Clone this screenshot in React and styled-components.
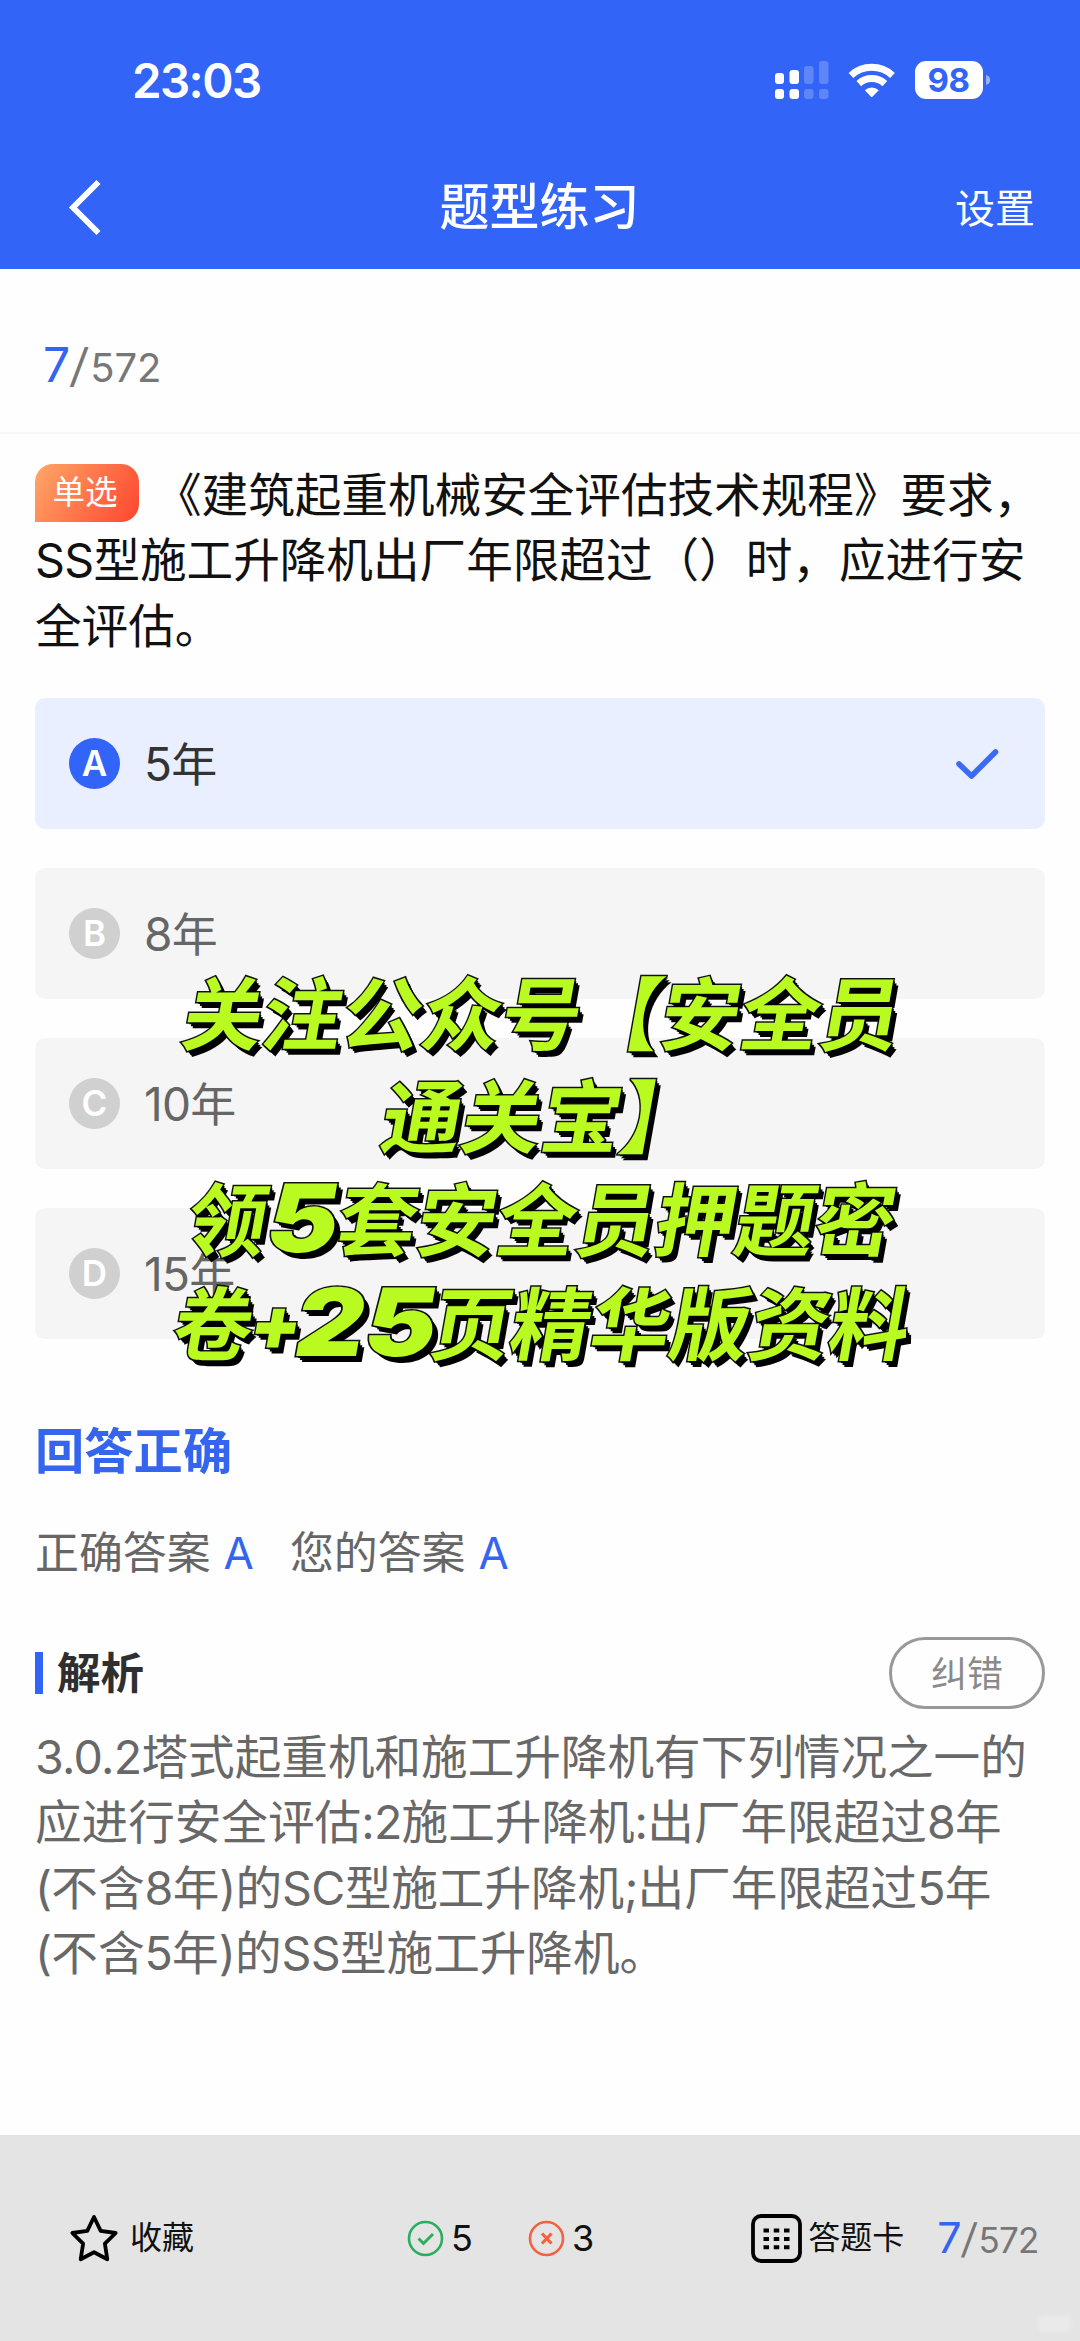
import styled, { createGlobalStyle, css } from 'styled-components';

const GlobalStyle = createGlobalStyle`
  * {
    box-sizing: border-box;
  }

  body {
    margin: 0;
    background: #fefefe;
    font-family: Inter, 'Noto Sans CJK SC', sans-serif;
    font-feature-settings: 'calt' 0;
    -webkit-font-smoothing: antialiased;
  }
`;

const Page = styled.div`
  position: relative;
  width: 1080px;
  height: 2341px;
  display: flex;
  flex-direction: column;
  overflow: hidden;
  background: #fefefe;
`;

const Header = styled.header`
  height: 269px;
  background: #3164f7;
  color: #fff;
`;

const StatusBar = styled.div`
  height: 160px;
  padding: 0 89px 0 132px;
  display: flex;
  align-items: center;
  justify-content: space-between;
`;

const Time = styled.span`
  font-size: 47.5px;
  font-weight: 600;
  letter-spacing: -1.6px;
`;

const NavBar = styled.div`
  height: 94px;
  padding: 0 45px 0 66px;
  display: grid;
  grid-template-columns: 1fr auto 1fr;
  align-items: center;
`;

const NavTitle = styled.h1`
  margin: 0;
  padding-right: 22px;
  font-size: 50px;
  font-weight: 500;
  line-height: 70px;
`;

const NavAction = styled.span`
  justify-self: end;
  padding-top: 4px;
  font-size: 40px;
  line-height: 60px;
`;

const ProgressBar = styled.div`
  height: 165px;
  padding: 66px 0 0 43px;
  border-bottom: 2px solid #f6f6f6;
`;

const Progress = styled.div`
  display: flex;
  align-items: baseline;
  line-height: 60px;
  font-size: ${props => (props.$small ? '35px' : '40px')};
  letter-spacing: ${props => (props.$small ? '-0.8px' : '-0.2px')};
  color: #777;

  b {
    font-size: ${props => (props.$small ? '43px' : '48px')};
    font-weight: 400;
    color: #3565ee;
  }

  i {
    font-style: normal;
    font-size: 1.15em;
    transform: skewX(-6deg);
    margin: 0 3px 0 1px;
  }
`;

const Content = styled.main`
  flex: 1;
  padding: 29px 35px 0;
`;

const Question = styled.div`
  height: 197px;
  font-size: 46.6px;
  line-height: 65.4px;
  color: #111;
  white-space: nowrap;
`;

const Line = styled.div`
  height: 65.4px;
  display: flex;
  align-items: center;
`;

const Latin = styled.span`
  letter-spacing: -0.7px;
`;

const TypeBadge = styled.span`
  width: 104px;
  height: 58px;
  margin: -5px 16px 0 0;
  padding-right: 4px;
  border-radius: 18px 18px 18px 0;
  background: linear-gradient(120deg, #ffa265 5%, #ff4d33 92%);
  color: #fff;
  font-size: 32.5px;
  line-height: 58px;
  text-align: center;
`;

const Options = styled.div`
  margin-top: 38px;
  display: flex;
  flex-direction: column;
  gap: 39px;
`;

const OptionLetter = styled.span`
  width: 51px;
  height: 51px;
  margin-right: 24px;
  border-radius: 50%;
  background: #d0d0d0;
  color: #fff;
  font-size: 35px;
  font-weight: 600;
  line-height: 51px;
  text-align: center;
`;

const Option = styled.div`
  height: 131px;
  padding: 0 45px 0 34px;
  display: flex;
  align-items: center;
  border-radius: 10px;
  background: #f5f5f5;
  color: #666;
  font-size: 46px;
  line-height: 66px;

  svg {
    margin-left: auto;
  }

  ${props =>
    props.$active &&
    css`
      background: #e9effe;
      color: #333;

      ${OptionLetter} {
        background: #3164f7;
      }
    `}
`;

const Result = styled.h2`
  margin: 77px 0 0;
  font-size: 49.3px;
  font-weight: 700;
  line-height: 70px;
  color: #3565ee;
`;

const Answers = styled.div`
  margin-top: 35px;
  display: flex;
  font-size: 43.9px;
  line-height: 64px;
  color: #666;
`;

const Answer = styled.span`
  margin-right: 36px;
  white-space: nowrap;

  b {
    margin-left: 13px;
    font-weight: 400;
    color: #3565ee;
  }
`;

const AnalysisHead = styled.div`
  height: 72px;
  margin-top: 52px;
  display: flex;
  align-items: center;
  justify-content: space-between;
`;

const AnalysisTitle = styled.h3`
  margin: 0;
  display: flex;
  align-items: center;
  font-size: 43.5px;
  font-weight: 700;
  line-height: 60px;
  color: #2f2f2f;

  &::before {
    content: '';
    width: 8px;
    height: 42px;
    margin-right: 14px;
    background: #3164f7;
  }
`;

const ReportButton = styled.button`
  width: 156px;
  height: 72px;
  padding: 0 0 5px;
  border: 3px solid #999;
  border-radius: 36px;
  background: none;
  color: #8a8a8a;
  font-family: inherit;
  font-size: 36px;
`;

const AnalysisText = styled.div`
  margin-top: 16px;
  font-size: 46.6px;
  line-height: 65.4px;
  color: #686868;
  white-space: nowrap;
`;

const Footer = styled.footer`
  height: 206px;
  padding: 0 42px 0 69px;
  display: flex;
  align-items: center;
  background: #e4e4e4;
`;

const FooterItem = styled.div`
  height: 60px;
  margin-left: ${props => props.$left || 0}px;
  display: flex;
  align-items: center;
  gap: ${props => props.$gap}px;
  font-size: ${props => props.$size || 32}px;
  line-height: 60px;
  color: #111;
  white-space: nowrap;
`;

const Promo = styled.div`
  position: absolute;
  top: 964px;
  left: 2px;
  width: 1080px;
  display: flex;
  flex-direction: column;
  align-items: center;
  font-size: 79.6px;
  font-weight: 700;
  line-height: 103.2px;
  color: #b9fb20;
  -webkit-text-stroke: 3px #111;
  paint-order: stroke fill;
  text-shadow: 2px 2px 0 #000, 4px 4px 0 #000, 6px 6px 0 #000;
`;

const PromoLine = styled.div`
  height: 103.2px;
  transform: skewX(-10deg);
  white-space: nowrap;
`;

const PromoNumber = styled.span`
  display: inline-block;
  margin: 0 ${props => props.$gap || 0}px;
  font-size: 94px;
  font-weight: 900;
  line-height: 0;
  transform: translateY(2px) scaleX(1.14);
`;

const PromoPlus = styled(PromoNumber)`
  margin: 0 -1px 0 -3px;
  font-size: 74px;
  transform: translateY(-4px);
`;

const Watermark = styled.div`
  position: absolute;
  right: 8px;
  bottom: 9px;
  width: 34px;
  height: 17px;
  border-radius: 6px;
  background: rgba(255, 255, 255, 0.22);
  filter: blur(2px);
`;

const options = [
  { letter: 'A', text: '5年' },
  { letter: 'B', text: '8年' },
  { letter: 'C', text: '10年' },
  { letter: 'D', text: '15年' },
];

const analysis = [
  '3.0.2塔式起重机和施工升降机有下列情况之一的',
  '应进行安全评估:2施工升降机:出厂年限超过8年',
  '(不含8年)的SC型施工升降机;出厂年限超过5年',
  '(不含5年)的SS型施工升降机。',
];

// tightens digits and letters, leaves the Chinese spacing alone
function Mixed({ text }) {
  return (
    <span>
      {text.split(/([\x20-\x7e]+)/).map((part, i) => (i % 2 ? <Latin key={i}>{part}</Latin> : part))}
    </span>
  );
}

function StatusIcons() {
  return (
    <svg width="216" height="40" viewBox="775 60 216 40">
      <g fill="#fff">
        <rect x="775" y="73" width="9" height="11" rx="3" />
        <rect x="789.5" y="70" width="9.5" height="14" rx="3" />
        <rect x="775" y="89" width="9" height="10" rx="3" />
        <rect x="789.5" y="89" width="9.5" height="10" rx="3" />
      </g>
      <g fill="#fff" opacity="0.22">
        <rect x="804" y="66" width="9.5" height="18" rx="3" />
        <rect x="819" y="61" width="9.5" height="23" rx="3" />
        <rect x="804" y="89" width="9.5" height="10" rx="3" />
        <rect x="819" y="89" width="9.5" height="10" rx="3" />
      </g>
      <g fill="none" stroke="#fff" strokeWidth="7">
        <path d="M851 75.5a30.5 30.5 0 0 1 41.5 0" />
        <path d="M858.8 83.6a19.3 19.3 0 0 1 26 0" />
      </g>
      <path d="M864.8 90.3a10.4 10.4 0 0 1 14 0L872.6 96.6a1.2 1.2 0 0 1-1.8 0z" fill="#fff" />
      <rect x="915" y="61" width="68" height="38" rx="11" fill="#fff" />
      <path d="M986 75c5.5 1 5.5 9 0 10z" fill="#fff" opacity="0.5" />
      <text x="948.5" y="92" textAnchor="middle" fontSize="33" fontWeight="700" letterSpacing="-0.5" fill="#3164f7">
        98
      </text>
    </svg>
  );
}

function App() {
  return (
    <Page>
      <GlobalStyle />
      <Header>
        <StatusBar>
          <Time>23:03</Time>
          <StatusIcons />
        </StatusBar>
        <NavBar>
          <svg width="38" height="58" viewBox="0 0 38 58" fill="none" stroke="#fff" strokeWidth="5.8">
            <path d="M32.5 4L7 29.5 32.5 55" />
          </svg>
          <NavTitle>题型练习</NavTitle>
          <NavAction>设置</NavAction>
        </NavBar>
      </Header>

      <ProgressBar>
        <Progress>
          <b>7</b>
          <i>/</i>572
        </Progress>
      </ProgressBar>

      <Content>
        <Question>
          <Line>
            <TypeBadge>单选</TypeBadge>
            《建筑起重机械安全评估技术规程》要求，
          </Line>
          <Line>
            <Mixed text="SS型施工升降机出厂年限超过（）时，应进行安" />
          </Line>
          <Line>全评估。</Line>
        </Question>

        <Options>
          {options.map(option => (
            <Option key={option.letter} $active={option.letter === 'A'}>
              <OptionLetter>{option.letter}</OptionLetter>
              <Mixed text={option.text} />
              {option.letter === 'A' && (
                <svg width="46" height="34" viewBox="0 0 46 34" fill="none" stroke="#3b6bf3" strokeWidth="5.6" strokeLinecap="round" strokeLinejoin="round">
                  <path d="M5 17l12.5 12 24-24" />
                </svg>
              )}
            </Option>
          ))}
        </Options>

        <Result>回答正确</Result>
        <Answers>
          <Answer>
            正确答案<b>A</b>
          </Answer>
          <Answer>
            您的答案<b>A</b>
          </Answer>
        </Answers>

        <AnalysisHead>
          <AnalysisTitle>解析</AnalysisTitle>
          <ReportButton>纠错</ReportButton>
        </AnalysisHead>
        <AnalysisText>
          {analysis.map(line => (
            <Line key={line}>
              <Mixed text={line} />
            </Line>
          ))}
        </AnalysisText>
      </Content>

      <Footer>
        <FooterItem $gap={12}>
          <svg width="49" height="50" viewBox="0 0 49 50" fill="none" stroke="#000" strokeWidth="3.8" strokeLinejoin="round">
            <path d="M25 4l6.7 13.8 15 2.2-10.8 10.7 2.4 15.6L25 39.2l-13.3 7.1 2.4-15.6L3.3 20l15-2.2z" />
          </svg>
          收藏
        </FooterItem>
        <FooterItem $left={213} $gap={7} $size={36}>
          <svg width="37" height="37" viewBox="0 0 37 37" fill="none" stroke="#28ae5c" strokeWidth="2.6">
            <circle cx="18.5" cy="18.5" r="16.5" />
            <path d="M11.5 18.5l5 5 9.5-9.5" strokeWidth="3" />
          </svg>
          5
        </FooterItem>
        <FooterItem $left={55} $gap={7} $size={36}>
          <svg width="37" height="37" viewBox="0 0 37 37" fill="none" stroke="#f5603e" strokeWidth="2.6">
            <circle cx="18.5" cy="18.5" r="16.5" />
            <path d="M14 13.5l9.5 10M23.5 13.5l-9.5 10" strokeWidth="3.2" />
          </svg>
          3
        </FooterItem>
        <FooterItem $left={157} $gap={6}>
          <svg width="51" height="49" viewBox="0 0 51 49" fill="none" stroke="#000">
            <rect x="2" y="2" width="47" height="45" rx="8" strokeWidth="3.8" />
            <path d="M12.5 16.5h26M12.5 25h26M12.5 33.3h26" strokeWidth="4" strokeDasharray="5.5 4.75" />
          </svg>
          答题卡
        </FooterItem>
        <FooterItem $left={33} $gap={0}>
          <Progress $small>
            <b>7</b>
            <i>/</i>572
          </Progress>
        </FooterItem>
      </Footer>

      <Promo>
        <PromoLine>关注公众号【安全员</PromoLine>
        <PromoLine>通关宝】</PromoLine>
        <PromoLine>
          领<PromoNumber $gap={4}>5</PromoNumber>套安全员押题密
        </PromoLine>
        <PromoLine>
          卷<PromoPlus>+</PromoPlus>
          <PromoNumber $gap={4}>25</PromoNumber>页精华版资料
        </PromoLine>
      </Promo>
      <Watermark />
    </Page>
  );
}

export default App;
